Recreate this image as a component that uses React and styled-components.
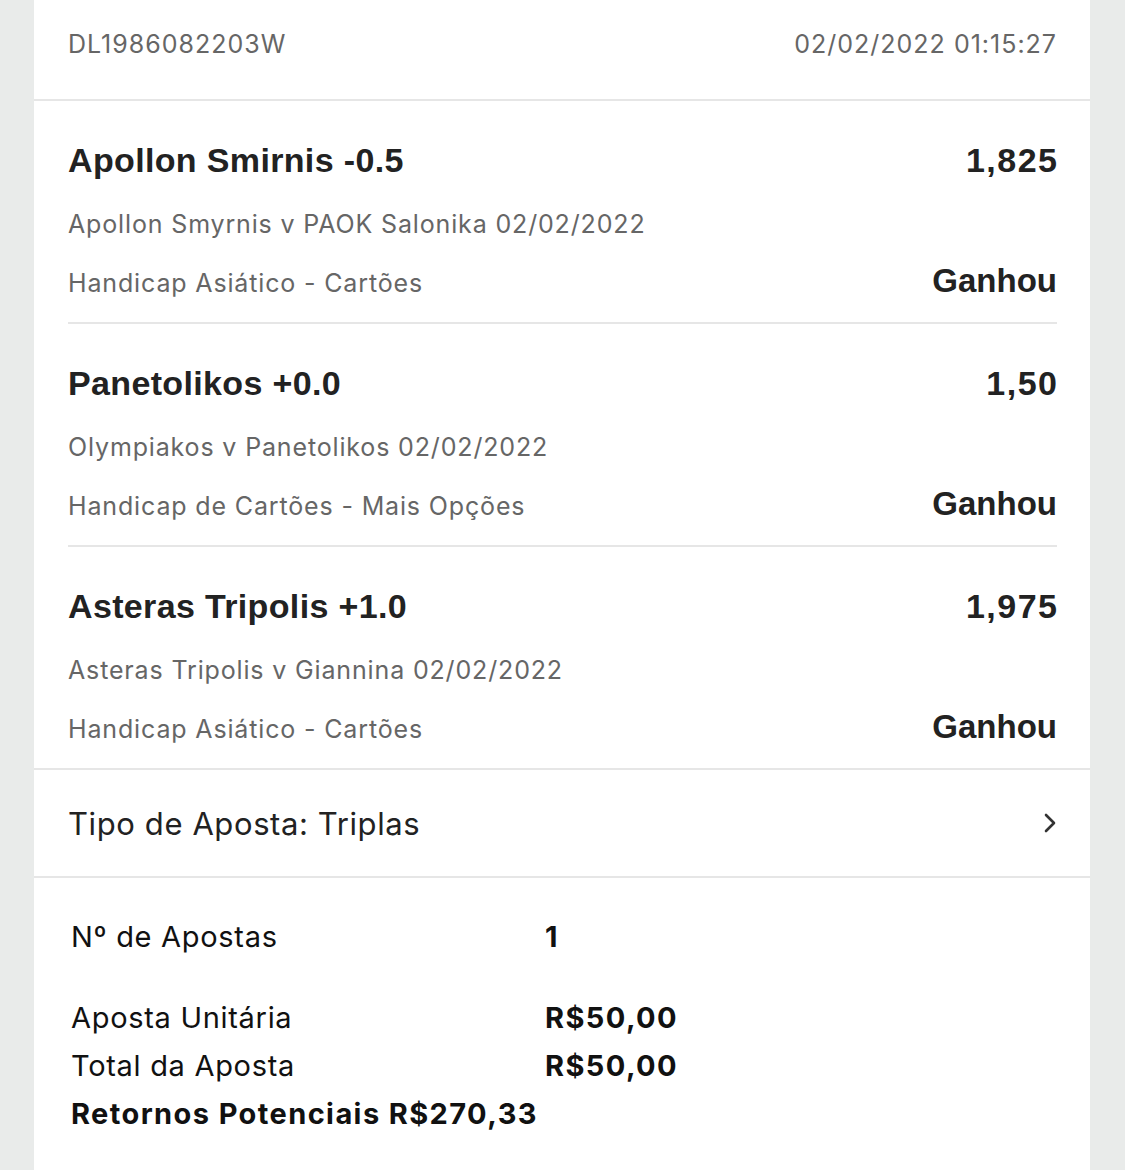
import React from 'react';
import styled, { createGlobalStyle } from "styled-components"

const Global = createGlobalStyle`
  html, body {
    margin: 0;
    padding: 0;
    background: #e9ebea;
  }
  * { box-sizing: border-box; }
`

const Page = styled.div`
  width: 1125px;
  height: 1170px;
  background: #e9ebea;
  padding: 0 35px 0 34px;
  overflow: hidden;
  font-family: Inter, Roboto, sans-serif;
`

const Card = styled.div`
  background: #fff;
  height: 100%;
`

const Header = styled.div`
  height: 101px;
  padding: 24px 33px 0 34px;
  display: flex;
  justify-content: space-between;
  border-bottom: 2px solid #e6e6e6;
  color: #666;
  font-size: 25px;
  letter-spacing: 1px;
  line-height: 40px;
`

const Legs = styled.div`
  padding: 0 33px 0 34px;
  border-bottom: 2px solid #e6e6e6;
`

const Leg = styled.div`
  padding-top: 39px;
  border-bottom: ${p => (p.last ? "none" : "2px solid #e6e6e6")};
  height: ${p => (p.last ? "221px" : "223px")};
`

const Row = styled.div`
  display: flex;
  justify-content: space-between;
  align-items: center;
`

const Title = styled.div`
  font-family: "Liberation Sans", Arial, sans-serif;
  font-size: 34px;
  font-weight: 700;
  letter-spacing: 0.35px;
  line-height: 40px;
  color: #222;
`

const Odds = styled.div`
  font-family: "Liberation Sans", Arial, sans-serif;
  font-size: 34px;
  font-weight: 700;
  letter-spacing: 1.5px;
  margin-right: -1.5px;
  color: #222;
`

const Sub = styled.div`
  font-size: 25px;
  letter-spacing: 0.85px;
  line-height: 40px;
  color: #666;
  margin-top: ${p => p.gap || 0}px;
`

const Result = styled.div`
  font-family: "Liberation Sans", Arial, sans-serif;
  font-size: 33px;
  font-weight: 700;
  color: #222;
  margin-top: 15px;
`

const TypeRow = styled.div`
  height: 108px;
  padding: 0 33px 0 34px;
  display: flex;
  align-items: center;
  justify-content: space-between;
  border-bottom: 2px solid #e6e6e6;
  font-size: 31px;
  letter-spacing: 0.6px;
  color: #222;
`

const Summary = styled.div`
  padding: 35px 37px 0;
  color: #111;
  font-size: 29px;
  letter-spacing: 0.7px;
`

const SumRow = styled.div`
  display: grid;
  grid-template-columns: 474px auto;
  line-height: 48px;
  margin-bottom: ${p => p.gap || 0}px;
`

const Value = styled.span`
  font-weight: 700;
  letter-spacing: 1.4px;
`

const Total = styled.div`
  font-weight: 700;
  letter-spacing: 1.4px;
  line-height: 48px;
`

const legs = [
  {
    title: "Apollon Smirnis -0.5",
    odds: "1,825",
    event: "Apollon Smyrnis v PAOK Salonika 02/02/2022",
    market: "Handicap Asiático - Cartões",
  },
  {
    title: "Panetolikos +0.0",
    odds: "1,50",
    event: "Olympiakos v Panetolikos 02/02/2022",
    market: "Handicap de Cartões - Mais Opções",
  },
  {
    title: "Asteras Tripolis +1.0",
    odds: "1,975",
    event: "Asteras Tripolis v Giannina 02/02/2022",
    market: "Handicap Asiático - Cartões",
  },
]

const Chevron = () => (
  <svg width="16" height="24" viewBox="0 0 16 24" fill="none">
    <path d="M5 4 L13 12 L5 20" stroke="#333" strokeWidth="2.6" strokeLinecap="round" strokeLinejoin="round" />
  </svg>
)

const App = () => {
  return (
    <Page>
      <Global />
      <Card>
        <Header>
          <span>DL1986082203W</span>
          <span>02/02/2022 01:15:27</span>
        </Header>
        <Legs>
          {legs.map((l, i) => (
            <Leg key={i} last={i === legs.length - 1}>
              <Row>
                <Title>{l.title}</Title>
                <Odds>{l.odds}</Odds>
              </Row>
              <Sub gap={24}>{l.event}</Sub>
              <Row>
                <Sub gap={19}>{l.market}</Sub>
                <Result>Ganhou</Result>
              </Row>
            </Leg>
          ))}
        </Legs>
        <TypeRow>
          <span>Tipo de Aposta: Triplas</span>
          <Chevron />
        </TypeRow>
        <Summary>
          <SumRow gap={33}>
            <span>Nº de Apostas</span>
            <Value>1</Value>
          </SumRow>
          <SumRow>
            <span>Aposta Unitária</span>
            <Value>R$50,00</Value>
          </SumRow>
          <SumRow>
            <span>Total da Aposta</span>
            <Value>R$50,00</Value>
          </SumRow>
          <Total>Retornos Potenciais R$270,33</Total>
        </Summary>
      </Card>
    </Page>
  )
}

export default App
